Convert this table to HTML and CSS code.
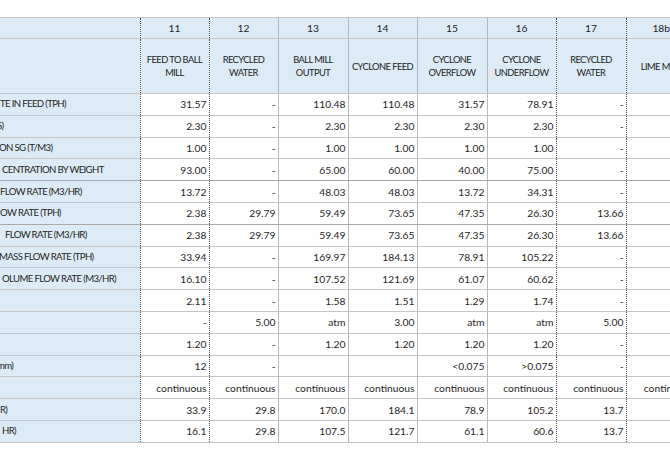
FILE: index.html
```html
<!DOCTYPE html>
<html>
<head>
<meta charset="utf-8">
<link rel="stylesheet" href="styles.css">
</head>
<body>
<div class="sheet">
<table class="grid">
<colgroup>
<col class="c-label"><col class="c-a"><col class="c-a"><col class="c-b"><col class="c-a"><col class="c-b"><col class="c-a"><col class="c-b"><col class="c-b">
</colgroup>
<thead>
<tr class="h1 d">
<th class="lab"></th><th>11</th><th>12</th><th>13</th><th>14</th><th>15</th><th>16</th><th>17</th><th>18b</th>
</tr>
<tr class="h2">
<th class="lab"></th><th>FEED TO BALL<br>MILL</th><th>RECYCLED<br>WATER</th><th>BALL MILL<br>OUTPUT</th><th>CYCLONE FEED</th><th>CYCLONE<br>OVERFLOW</th><th>CYCLONE<br>UNDERFLOW</th><th>RECYCLED<br>WATER</th><th>LIME MILK</th>
</tr>
</thead>
<tbody>
<tr class="d"><td class="lab">TE IN FEED (TPH)</td><td>31.57</td><td>-</td><td>110.48</td><td>110.48</td><td>31.57</td><td>78.91</td><td>-</td><td></td></tr>
<tr><td class="lab n3">S)</td><td>2.30</td><td>-</td><td>2.30</td><td>2.30</td><td>2.30</td><td>2.30</td><td>-</td><td></td></tr>
<tr><td class="lab n1">ON SG (T/M3)</td><td>1.00</td><td>-</td><td>1.00</td><td>1.00</td><td>1.00</td><td>1.00</td><td>-</td><td></td></tr>
<tr class="m"><td class="lab p2">CENTRATION BY WEIGHT</td><td>93.00</td><td>-</td><td>65.00</td><td>60.00</td><td>40.00</td><td>75.00</td><td>-</td><td></td></tr>
<tr><td class="lab">FLOW RATE (M3/HR)</td><td>13.72</td><td>-</td><td>48.03</td><td>48.03</td><td>13.72</td><td>34.31</td><td>-</td><td></td></tr>
<tr class="m"><td class="lab">OW RATE (TPH)</td><td>2.38</td><td>29.79</td><td>59.49</td><td>73.65</td><td>47.35</td><td>26.30</td><td>13.66</td><td></td></tr>
<tr><td class="lab p5">FLOW RATE (M3/HR)</td><td>2.38</td><td>29.79</td><td>59.49</td><td>73.65</td><td>47.35</td><td>26.30</td><td>13.66</td><td></td></tr>
<tr class="d"><td class="lab n1">MASS FLOW RATE (TPH)</td><td>33.94</td><td>-</td><td>169.97</td><td>184.13</td><td>78.91</td><td>105.22</td><td>-</td><td></td></tr>
<tr class="d"><td class="lab p2">OLUME FLOW RATE (M3/HR)</td><td>16.10</td><td>-</td><td>107.52</td><td>121.69</td><td>61.07</td><td>60.62</td><td>-</td><td></td></tr>
<tr><td class="lab"></td><td>2.11</td><td>-</td><td>1.58</td><td>1.51</td><td>1.29</td><td>1.74</td><td>-</td><td></td></tr>
<tr class="d"><td class="lab"></td><td>-</td><td>5.00</td><td>atm</td><td>3.00</td><td>atm</td><td>atm</td><td>5.00</td><td></td></tr>
<tr><td class="lab"></td><td>1.20</td><td>-</td><td>1.20</td><td>1.20</td><td>1.20</td><td>1.20</td><td>-</td><td></td></tr>
<tr class="d"><td class="lab n3">mm)</td><td>12</td><td>-</td><td></td><td></td><td>&lt;0.075</td><td>&gt;0.075</td><td>-</td><td></td></tr>
<tr><td class="lab"></td><td>continuous</td><td>continuous</td><td>continuous</td><td>continuous</td><td>continuous</td><td>continuous</td><td>continuous</td><td>continuous</td></tr>
<tr><td class="lab">R)</td><td>33.9</td><td>29.8</td><td>170.0</td><td>184.1</td><td>78.9</td><td>105.2</td><td>13.7</td><td></td></tr>
<tr><td class="lab p2">HR)</td><td>16.1</td><td>29.8</td><td>107.5</td><td>121.7</td><td>61.1</td><td>60.6</td><td>13.7</td><td></td></tr>
</tbody>
</table>
</div>
</body>
</html>
```
FILE: styles.css
```css
html, body {
  margin: 0;
  padding: 0;
  background: #ffffff;
  overflow: hidden;
}
.sheet {
  width: 670px;
  height: 450px;
  overflow: hidden;
  padding-top: 17px;
  box-sizing: border-box;
}
.grid {
  border-collapse: collapse;
  table-layout: fixed;
  width: 696px;
  font-family: Lato, "Liberation Sans", sans-serif;
  font-size: 10.3px;
  color: #1e1e1e;
}
.c-label { width: 140px; }
.c-a { width: 69px; }
.c-b { width: 70px; }
.grid th, .grid td {
  padding: 0 2px 0 1px;
  border-bottom: 1px solid #c6c6c6;
  border-top: 1px solid #c6c6c6;
  overflow: hidden;
  white-space: nowrap;
  height: 21.8px;
  box-sizing: border-box;
  line-height: 12px;
}
.grid td { text-align: right; }
.grid th {
  font-weight: normal;
  background: #ddebf7;
  text-align: center;
  padding: 0;
}
.grid .h1 th { height: 21px; font-size: 10.3px; }
.grid .h2 th {
  height: 55px;
  font-size: 9.3px;
  letter-spacing: -0.55px;
  line-height: 13px;
}
.grid td.lab {
  background: #ddebf7;
  text-align: left;
  padding-left: 0;
  font-size: 9.6px;
  letter-spacing: -0.65px;
}
.grid td.lab.n1 { text-indent: -1px; }
.grid td.lab.n3 { text-indent: -3px; }
.grid td.lab.p2 { padding-left: 2px; }
.grid td.lab.p5 { padding-left: 5px; }
.grid tr.d > * { border-bottom: 1px dotted #4a4a4a; }
.grid tr.m > * { border-bottom-color: #a9a9a9; }
.grid tr > *:nth-child(1),
.grid tr > *:nth-child(2),
.grid tr > *:nth-child(7),
.grid tr > *:nth-child(8) { border-right: 1px dotted #4a4a4a; }
.grid tr > *:nth-child(3),
.grid tr > *:nth-child(4),
.grid tr > *:nth-child(5),
.grid tr > *:nth-child(6) { border-right: 1px solid #b8b8b8; }
```
